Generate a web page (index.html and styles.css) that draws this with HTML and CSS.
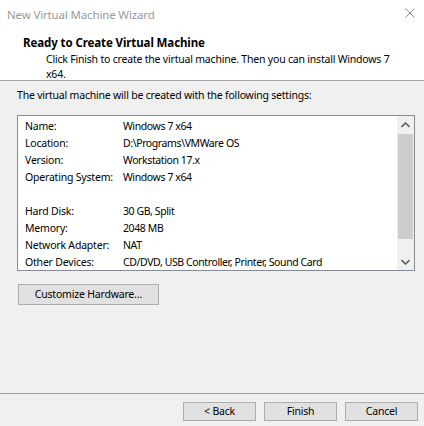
FILE: index.html
```html
<!DOCTYPE html>
<html>
<head>
<meta charset="utf-8">
<link rel="stylesheet" href="styles.css">
</head>
<body>
<div class="window">
  <div class="header">
    <div class="titlebar">
      <span class="title">New Virtual Machine Wizard</span>
      <svg class="close" width="10" height="10" viewBox="0 0 10 10"><path d="M0.5 0.5 L9.5 9.5 M9.5 0.5 L0.5 9.5" stroke="#8c8c8c" stroke-width="1" fill="none"/></svg>
    </div>
    <div class="heading">Ready to Create Virtual Machine</div>
    <div class="subtitle">Click Finish to create the virtual machine. Then you can install Windows 7 x64.</div>
  </div>
  <div class="body">
    <div class="intro">The virtual machine will be created with the following settings:</div>
    <div class="listbox">
      <div class="rows">
        <div class="row"><span class="label">Name:</span><span class="value">Windows 7 x64</span></div>
        <div class="row"><span class="label">Location:</span><span class="value">D:\Programs\VMWare OS</span></div>
        <div class="row"><span class="label">Version:</span><span class="value">Workstation 17.x</span></div>
        <div class="row"><span class="label">Operating System:</span><span class="value">Windows 7 x64</span></div>
        <div class="row"></div>
        <div class="row"><span class="label">Hard Disk:</span><span class="value">30 GB, Split</span></div>
        <div class="row"><span class="label">Memory:</span><span class="value">2048 MB</span></div>
        <div class="row"><span class="label">Network Adapter:</span><span class="value">NAT</span></div>
        <div class="row"><span class="label">Other Devices:</span><span class="value">CD/DVD, USB Controller, Printer, Sound Card</span></div>
      </div>
      <div class="scrollbar">
        <div class="arrow"><svg width="9" height="6" viewBox="0 0 9 6"><path d="M0.5 5 L4.5 1 L8.5 5" stroke="#606060" stroke-width="1.6" fill="none"/></svg></div>
        <div class="thumb"></div>
        <div class="track"></div>
        <div class="arrow"><svg width="9" height="6" viewBox="0 0 9 6"><path d="M0.5 1 L4.5 5 L8.5 1" stroke="#606060" stroke-width="1.6" fill="none"/></svg></div>
      </div>
    </div>
    <div class="custom-row"><button class="btn btn-custom">Customize Hardware…</button></div>
  </div>
  <div class="footer">
    <button class="btn">&lt; Back</button>
    <button class="btn">Finish</button>
    <button class="btn">Cancel</button>
  </div>
</div>
</body>
</html>
```
FILE: styles.css
```css
html, body {
  margin: 0;
  padding: 0;
}
body {
  width: 424px;
  height: 426px;
  background: #f0f0f0;
  font-family: "Noto Sans", "Open Sans", sans-serif;
  font-size: 10.5px;
  letter-spacing: -0.2px;
  color: #000;
  overflow: hidden;
}
.window {
  height: 426px;
  display: flex;
  flex-direction: column;
}
.header {
  background: #fff;
  height: 80px;
  border-bottom: 1px solid #a0a0a0;
  box-sizing: content-box;
}
.titlebar {
  height: 28px;
  display: flex;
  align-items: center;
  justify-content: space-between;
  padding: 0 9px 0 7px;
}
.title {
  color: #999;
  font-size: 11.5px;
  letter-spacing: -0.15px;
}
.close {
  margin-top: -2px;
}
.heading {
  font-weight: bold;
  margin: 7px 0 0 23px;
  line-height: 16px;
  font-size: 11.5px;
  letter-spacing: -0.1px;
}
.subtitle {
  margin-left: 46px;
  width: 352px;
  line-height: 15px;
  margin-top: 1px;
}
.body {
  padding: 0 9px 0 17px;
}
.intro {
  margin-top: 7px;
  line-height: 15px;
}
.listbox {
  margin-top: 12px;
  height: 154px;
  border: 1px solid #868a93;
  background: #fff;
  display: flex;
}
.rows {
  flex: 1;
  padding: 2px 0 0 7px;
}
.row {
  height: 17px;
  line-height: 17px;
  display: flex;
  white-space: nowrap;
}
.label {
  width: 98px;
}
.value {
  letter-spacing: -0.4px;
}
.scrollbar {
  width: 17px;
  background: #f0f0f0;
  display: flex;
  flex-direction: column;
}
.arrow {
  height: 17px;
  display: flex;
  align-items: center;
  justify-content: center;
}
.thumb {
  height: 105px;
  background: #cdcdcd;
  margin: 1px 1px 0 1px;
}
.track {
  flex: 1;
}
.btn {
  font-family: inherit;
  font-size: 10.5px;
  letter-spacing: -0.2px;
  color: #000;
  background: #e1e1e1;
  border: 1px solid #adadad;
  padding: 0;
  margin: 0;
  height: 19px;
  width: 73px;
  box-sizing: border-box;
  line-height: 17px;
}
.custom-row {
  margin-top: 13px;
  padding-left: 1px;
}
.btn-custom {
  width: 141px;
  height: 21px;
}
.footer {
  margin-top: auto;
  border-top: 1px solid #a0a0a0;
  height: 33px;
  display: flex;
  justify-content: flex-end;
  gap: 8px;
  padding: 8px 6px 0 0;
  box-sizing: border-box;
}
```
